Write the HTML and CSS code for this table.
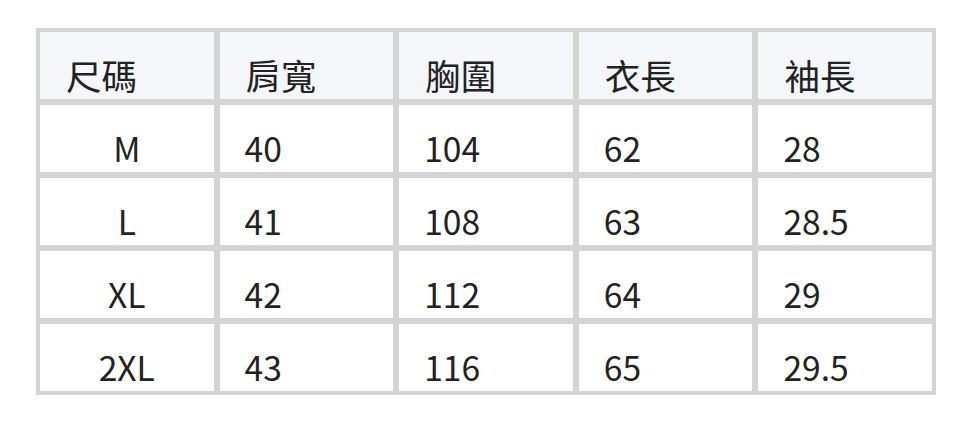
FILE: index.html
```html
<!DOCTYPE html>
<html lang="zh-Hant">
<head>
<meta charset="utf-8">
<title>尺碼表</title>
<link rel="stylesheet" href="styles.css">
</head>
<body>
<div class="size-table" role="table">
  <div class="cell head" role="columnheader">尺碼</div>
  <div class="cell head" role="columnheader">肩寬</div>
  <div class="cell head" role="columnheader">胸圍</div>
  <div class="cell head" role="columnheader">衣長</div>
  <div class="cell head" role="columnheader">袖長</div>

  <div class="cell size" role="cell">M</div>
  <div class="cell" role="cell">40</div>
  <div class="cell" role="cell">104</div>
  <div class="cell" role="cell">62</div>
  <div class="cell" role="cell">28</div>

  <div class="cell size" role="cell">L</div>
  <div class="cell" role="cell">41</div>
  <div class="cell" role="cell">108</div>
  <div class="cell" role="cell">63</div>
  <div class="cell" role="cell">28.5</div>

  <div class="cell size" role="cell">XL</div>
  <div class="cell" role="cell">42</div>
  <div class="cell" role="cell">112</div>
  <div class="cell" role="cell">64</div>
  <div class="cell" role="cell">29</div>

  <div class="cell size" role="cell">2XL</div>
  <div class="cell" role="cell">43</div>
  <div class="cell" role="cell">116</div>
  <div class="cell" role="cell">65</div>
  <div class="cell" role="cell">29.5</div>
</div>
</body>
</html>
```

FILE: styles.css
```css
html, body {
  margin: 0;
  padding: 0;
  background: #ffffff;
}

body {
  padding: 28px 0 0 36px;
  font-family: "Noto Sans CJK TC", "Noto Sans", sans-serif;
  color: #222222;
}

.size-table {
  width: 900px;
  box-sizing: border-box;
  padding: 4px;
  background: #d4d4d4;
  display: grid;
  grid-template-columns: repeat(5, 1fr);
  grid-auto-rows: 67px;
  gap: 6px;
}

.cell {
  background: #ffffff;
  box-sizing: border-box;
  padding: 20px 0 0 25px;
  font-size: 33.6px;
  line-height: 46px;
  white-space: nowrap;
  overflow: hidden;
}

.cell.head {
  background: #f5f6fa;
  font-size: 35.5px;
  padding-left: 26px;
}

.cell.size {
  padding-left: 0;
  text-align: center;
}
```
